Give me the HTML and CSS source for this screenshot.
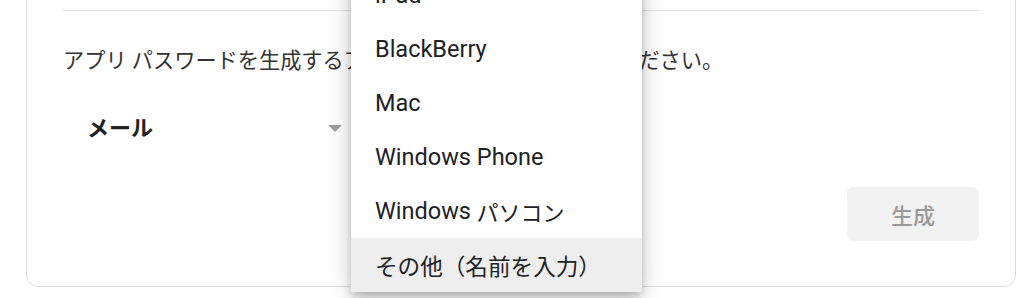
FILE: index.html
```html
<!DOCTYPE html>
<html lang="ja">
<head>
<meta charset="utf-8">
<title>アプリ パスワード</title>
<link rel="stylesheet" href="styles.css">
</head>
<body>
<div class="card">
  <div class="card-head"></div>
  <div class="divider"></div>
  <p class="desc">アプリ パスワードを生成するアプリとデバイスを選択してください。</p>
  <div class="select-row">
    <div class="select">
      <span class="select-value">メール</span>
      <span class="arrow"></span>
    </div>
    <div class="select select-device">
      <span class="select-value">デバイスを選択</span>
      <span class="arrow"></span>
    </div>
    <ul class="menu">
      <li class="menu-item">iPhone</li>
      <li class="menu-item">iPad</li>
      <li class="menu-item">BlackBerry</li>
      <li class="menu-item">Mac</li>
      <li class="menu-item">Windows Phone</li>
      <li class="menu-item">Windows <span class="ja">パソコン</span></li>
      <li class="menu-item is-active"><span class="ja">その他（名前を入力）</span></li>
    </ul>
  </div>
  <div class="actions">
    <button class="btn-generate" type="button" disabled>生成</button>
  </div>
</div>
</body>
</html>
```

FILE: styles.css
```css
html, body {
  margin: 0;
  padding: 0;
  background: #ffffff;
}

html {
  height: 100%;
}

body {
  min-height: 100%;
  font-family: Roboto, "Noto Sans CJK JP", sans-serif;
  color: #202124;
}

.card {
  box-sizing: border-box;
  width: 990px;
  margin: -20px 0 0 26px;
  padding: 0 36px 45px;
  border: 1px solid #dadce0;
  border-radius: 12px;
  background: #fff;
}

.card-head {
  height: 29px;
}

.divider {
  border-top: 1px solid #e0e0e0;
}

.desc {
  margin: 35px 0 0;
  font-size: 21.2px;
  line-height: 30px;
  color: #333333;
}

.select-row {
  position: relative;
  display: flex;
  margin-top: 23px;
  height: 54px;
}

.select {
  box-sizing: border-box;
  width: 288px;
  display: flex;
  align-items: center;
  justify-content: space-between;
  padding: 0 9px 0 24px;
}

.select-value {
  font-size: 22px;
  font-weight: 700;
  color: #202124;
}

.arrow {
  width: 0;
  height: 0;
  margin-top: 4px;
  border-left: 7.5px solid transparent;
  border-right: 7.5px solid transparent;
  border-top: 7.5px solid #9e9e9e;
}

.menu {
  position: absolute;
  top: -185px;
  left: 288px;
  width: 291px;
  margin: 0;
  padding: 0;
  list-style: none;
  background: #fff;
  box-shadow: 0 4px 8px -2px rgba(0,0,0,0.2), 0 9px 15px 0 rgba(0,0,0,0.14), 0 2px 27px 0 rgba(0,0,0,0.12);
}

.menu-item {
  height: 54px;
  display: flex;
  align-items: center;
  padding-left: 24px;
  font-size: 23.5px;
  color: #202124;
  white-space: nowrap;
}

.menu-item .ja {
  font-size: 22px;
  margin-left: 0.25em;
}

.menu-item.is-active .ja {
  margin-left: 0;
  font-size: 22.6px;
}

.menu-item.is-active {
  background: #eeeeee;
}

.actions {
  display: flex;
  justify-content: flex-end;
  margin-top: 34px;
}

.btn-generate {
  width: 132px;
  height: 54px;
  border: none;
  border-radius: 6px;
  background: #f2f2f2;
  color: #999999;
  font-family: Roboto, "Noto Sans CJK JP", sans-serif;
  font-size: 22px;
  font-weight: 500;
  padding: 0;
}
```
